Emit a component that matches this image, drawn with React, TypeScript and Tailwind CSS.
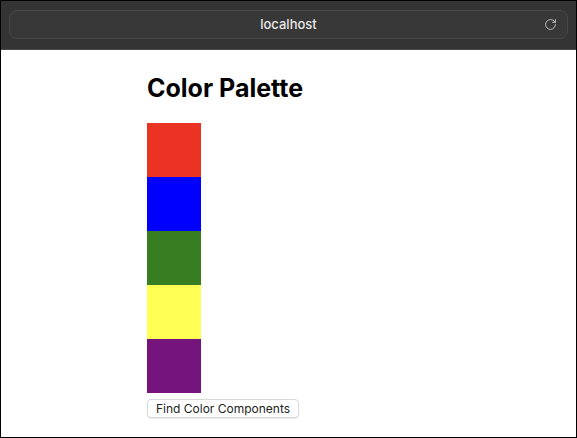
import { RotateCw } from 'lucide-react';

const colors = ['#EA3323', '#0000FF', '#377E22', '#FFFF54', '#75147C'];

export default function App() {
    return (
        <div className="flex h-[438px] w-[577px] flex-col overflow-hidden border border-black bg-white" style={{ fontFamily: 'Inter, "Noto Sans", sans-serif' }}>
            <div className="h-[49px] shrink-0 border-b border-[#4a4a4a] bg-[#343434] px-[8px] pt-[9px]">
                <div className="relative flex h-[29px] items-center justify-center rounded-[8px] border border-[#484848] bg-[#383838]">
                    <span className="text-[13px] font-medium text-[#e8e8e8]">localhost</span>
                    <RotateCw size={13} strokeWidth={1.6} className="absolute right-[10px] text-[#d0d0d0]" />
                </div>
            </div>
            <div className="pl-[146px]">
                <h1 className="mt-[23px] text-[25px] leading-[30px] font-bold text-black">Color Palette</h1>
                <div className="mt-[20px] flex flex-col">
                    {colors.map((c) => (
                        <div key={c} className="h-[54px] w-[54px]" style={{ backgroundColor: c }} />
                    ))}
                </div>
                <button className="mt-[6px] rounded-[4px] border border-[#d8d8d8] bg-white px-[8px] py-[1px] text-[12px] leading-[15px] text-[#222] shadow-[0_1px_1px_rgba(0,0,0,0.08)]">
                    Find Color Components
                </button>
            </div>
        </div>
    );
}
